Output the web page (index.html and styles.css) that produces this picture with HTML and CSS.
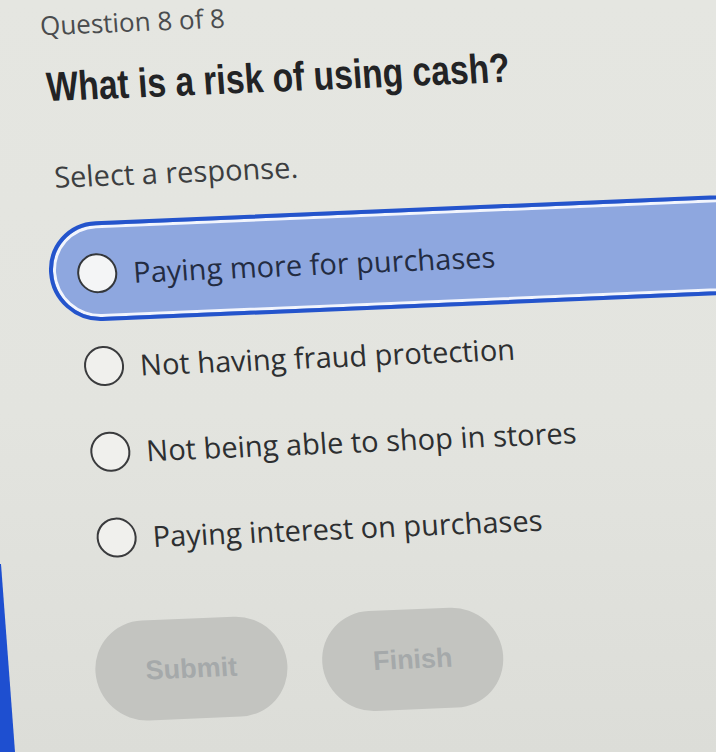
FILE: index.html
```html
<!DOCTYPE html>
<html lang="en">
<head>
<meta charset="utf-8">
<title>Question 8 of 8</title>
<link rel="stylesheet" href="styles.css">
</head>
<body>
<main class="quiz">
  <p class="counter">Question 8 of 8</p>
  <h1 class="prompt">What is a risk of using cash?</h1>
  <p class="instruction">Select a response.</p>
  <ul class="options">
    <li class="option selected"><span class="radio"></span><span class="label">Paying more for purchases</span></li>
    <li class="option"><span class="radio"></span><span class="label">Not having fraud protection</span></li>
    <li class="option"><span class="radio"></span><span class="label">Not being able to shop in stores</span></li>
    <li class="option"><span class="radio"></span><span class="label">Paying interest on purchases</span></li>
  </ul>
  <div class="actions">
    <button class="btn btn-submit" type="button">Submit</button>
    <button class="btn btn-finish" type="button">Finish</button>
  </div>
</main>
</body>
</html>
```
FILE: styles.css
```css
html, body {
  margin: 0;
  padding: 0;
  width: 716px;
  height: 752px;
  overflow: hidden;
}

body {
  background: linear-gradient(180deg, #e5e6e1 0%, #e3e4df 55%, #dcddd8 100%);
  font-family: "Open Sans", "Noto Sans", sans-serif;
  position: relative;
}

body::after {
  content: "";
  position: fixed;
  left: 0;
  bottom: 0;
  width: 15px;
  height: 188px;
  background: #1e4fd0;
  clip-path: polygon(0 0, 1px 0, 15px 100%, 0 100%);
}

.quiz {
  width: 716px;
  box-sizing: border-box;
  padding: 9px 0 0 40px;
  transform-origin: 0 0;
  transform: rotate(-2.4deg) skewX(1.8deg);
}

.counter {
  margin: 0 0 0 -2px;
  font-size: 26px;
  line-height: 36px;
  color: #4a4c4e;
}

.prompt {
  display: inline-block;
  margin: 20px 0 0 0;
  font-family: "Liberation Sans", Arial, sans-serif;
  font-weight: 700;
  font-size: 41px;
  line-height: 48px;
  color: #222325;
  white-space: nowrap;
  transform-origin: 0 50%;
  transform: scaleX(0.82);
}

.instruction {
  margin: 46px 0 0 1px;
  font-size: 29px;
  line-height: 40px;
  color: #3c3e40;
}

.options {
  list-style: none;
  margin: 26px -140px 0 -11px;
  padding: 0;
  display: flex;
  flex-direction: column;
}

.option {
  display: flex;
  align-items: center;
  gap: 16px;
  height: 86px;
  box-sizing: border-box;
  padding-left: 24px;
  border: 4px solid transparent;
  border-radius: 60px;
  font-size: 29px;
  color: #2d2f31;
}

.option.selected {
  height: 100px;
  margin-bottom: 2px;
  padding-top: 4px;
  border-color: #2454cc;
  background: #8ea7df;
  box-shadow: inset 0 0 0 3px #f2f5fd;
  color: #232c42;
}

.radio {
  flex: none;
  width: 40px;
  height: 40px;
  box-sizing: border-box;
  border: 2px solid #3a3b3d;
  border-radius: 50%;
  background: #f0f0ed;
}

.option.selected .radio {
  background: #f4f5f6;
  border-color: #34373b;
}

.label {
  white-space: nowrap;
  line-height: 40px;
}

.actions {
  display: flex;
  gap: 35px;
  margin: 41px 0 0 6px;
}

.btn {
  height: 100px;
  border: none;
  border-radius: 50px;
  background: #c3c4c0;
  color: #a5a9aa;
  font-family: "Liberation Sans", Arial, sans-serif;
  font-weight: 700;
  font-size: 27px;
  padding: 0;
}

.btn-submit {
  width: 192px;
}

.btn-finish {
  width: 181px;
}
```
